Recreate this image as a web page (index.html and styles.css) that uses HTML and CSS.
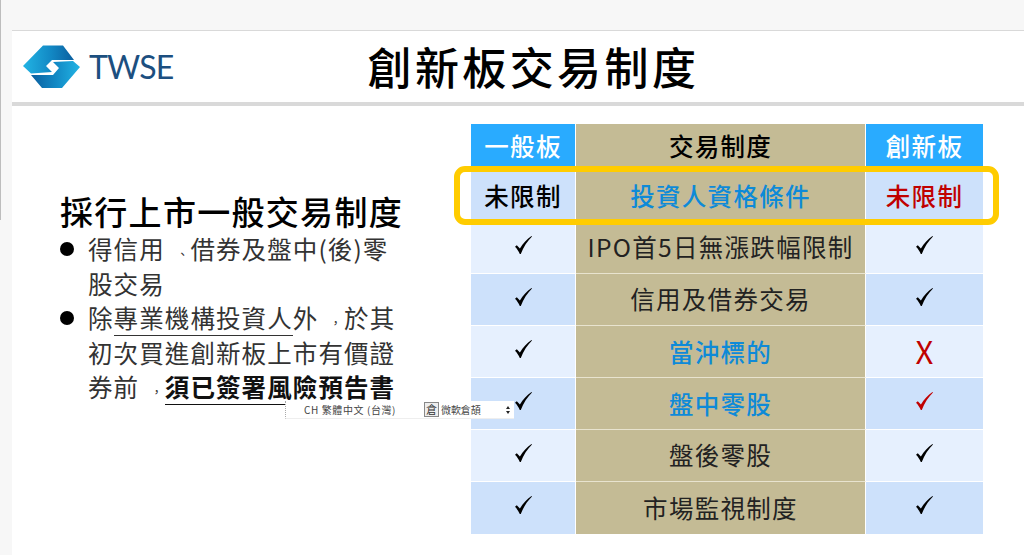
FILE: index.html
```html
<!DOCTYPE html>
<html lang="zh-Hant">
<head>
<meta charset="utf-8">
<title>創新板交易制度</title>
<link rel="stylesheet" href="styles.css">
</head>
<body>
<svg width="0" height="0" class="defs">
  <defs>
    <symbol id="check" viewBox="0 0 17 18"><path d="M0 10.800 L1.800 9.200 L4.900 12.600 C8 7.400 12 3 16.500 0 L17 .5 C12.400 5 8.400 11 5.800 18 L4.800 18 C3.700 15.400 2 12.800 0 10.800Z"/></symbol>
  </defs>
</svg>
<div class="edge"></div>
<main class="slide">
  <header class="head">
    <div class="logo">
      <svg class="mark" width="58" height="44" viewBox="23 45 58 44">
        <defs>
          <linearGradient id="g1" x1="0" x2="1" y1="0" y2="0"><stop offset="0" stop-color="#22b4e4"/><stop offset=".55" stop-color="#1288c4"/><stop offset="1" stop-color="#0b5f9f"/></linearGradient>
          <linearGradient id="g2" x1="0" x2="1" y1="0" y2="0"><stop offset="0" stop-color="#0b5f9f"/><stop offset=".5" stop-color="#1288c4"/><stop offset="1" stop-color="#22b4e4"/></linearGradient>
        </defs>
        <polygon fill="url(#g1)" points="23,66 43,45.500 63,45.500 74,60 52,60 46,66 52,72 31,73.500"/>
        <polygon fill="url(#g2)" points="80,67 62,88 42,88 31,75 53,75 59,68 53,62 73,61"/>
      </svg>
      <span class="brand">TWSE</span>
    </div>
    <h1 class="title">創新板交易制度</h1>
  </header>
  <div class="rule"></div>
  <div class="content">
    <section class="notes">
      <h2 class="lead">採行上市一般交易制度</h2>
      <ul class="points">
        <li class="point">得信用<span class="punct">、</span>借券及盤中(後)零股交易</li>
        <li class="point">除<u class="mark-u">專業機構投資人</u>外<span class="punct">，</span>於其初次買進創新板上市有價證券前<span class="punct">，</span><u class="strong-u">須已簽署風險預告書</u></li>
      </ul>
    </section>
    <section class="table-wrap">
      <div class="grid">
        <div class="cell hd">一般板</div><div class="cell mid hd-mid">交易制度</div><div class="cell hd">創新板</div>
        <div class="cell c1 med">未限制</div><div class="cell mid blue med">投資人資格條件</div><div class="cell c1 red med">未限制</div>
        <div class="cell c2"><svg class="tick"><use href="#check"/></svg></div><div class="cell mid">IPO首5日無漲跌幅限制</div><div class="cell c2"><svg class="tick"><use href="#check"/></svg></div>
        <div class="cell c1"><svg class="tick"><use href="#check"/></svg></div><div class="cell mid">信用及借券交易</div><div class="cell c1"><svg class="tick"><use href="#check"/></svg></div>
        <div class="cell c2"><svg class="tick"><use href="#check"/></svg></div><div class="cell mid blue med">當沖標的</div><div class="cell c2 red cross">X</div>
        <div class="cell c1"><svg class="tick"><use href="#check"/></svg></div><div class="cell mid blue med">盤中零股</div><div class="cell c1"><svg class="tick tick-red"><use href="#check"/></svg></div>
        <div class="cell c2"><svg class="tick"><use href="#check"/></svg></div><div class="cell mid">盤後零股</div><div class="cell c2"><svg class="tick"><use href="#check"/></svg></div>
        <div class="cell c1"><svg class="tick"><use href="#check"/></svg></div><div class="cell mid">市場監視制度</div><div class="cell c1"><svg class="tick"><use href="#check"/></svg></div>
      </div>
      <div class="highlight"></div>
    </section>
  </div>
</main>
<div class="ime">
  <span class="ime-lang">CH 繁體中文 (台灣)</span>
  <span class="ime-key">倉</span>
  <span class="ime-name">微軟倉頡</span>
  <span class="ime-spin"><i class="up"></i><i class="down"></i></span>
</div>
</body>
</html>
```
FILE: styles.css
```css
* { box-sizing: border-box; }
html, body { margin: 0; height: 100%; }
body {
  background: #f7f7f7;
  font-family: "Noto Sans CJK TC", "Noto Sans", sans-serif;
  overflow: hidden;
  padding: 30px 0 0 12px;
  color: #000;
}
.defs { position: absolute; }
.edge { position: absolute; left: 0; top: 0; width: 1px; height: 220px; background: #bdbdbd; }
.slide { background: #fff; border-top: 1px solid #d9d9d9; height: 525px; }
.head { height: 71px; display: flex; align-items: center; }
.logo { display: flex; align-items: center; margin-left: 11px; gap: 8px; margin-top: 1px; }
.mark { display: block; }
.brand { font-family: "Lato", sans-serif; font-size: 32px; color: #1c4f80; letter-spacing: -.8px; line-height: 1; }
.title { margin: -2px 0 0 194px; font-size: 44px; font-weight: 500; letter-spacing: 3.400px; line-height: 1; white-space: nowrap; }
.rule { height: 4px; background: #d9d9d9; }
.content { display: flex; padding: 18px 0 0 48px; }
.notes { width: 343px; padding-top: 67px; }
.lead { margin: 0; font-size: 33px; font-weight: 500; letter-spacing: 1.3px; line-height: 40px; white-space: nowrap; }
.points { list-style: none; margin: 1px 0 0; padding: 0; color: #333; font-size: 24.500px; line-height: 34.500px; letter-spacing: 1.100px; }
.point { position: relative; padding-left: 28px; }
.point::before { content: ""; position: absolute; left: 0; top: 10px; width: 14px; height: 14px; border-radius: 50%; background: #000; }
.punct { display: inline-block; transform: translate(5px, 5px) scale(.5); }
.mark-u { text-decoration: none; border-bottom: 1.500px solid #333; }
.strong-u { text-decoration: none; border-bottom: 1.500px solid #111; font-weight: 700; color: #111; }
.table-wrap { margin-left: 68px; position: relative; width: 512px; }
.grid { display: grid; grid-template-columns: 105px 290px 117px; grid-template-rows: 46px repeat(7, 52px); height: 408px; width: 512px; }
.cell { display: flex; align-items: center; justify-content: center; font-size: 24.500px; letter-spacing: 1.300px; border-bottom: 1px solid #fff; border-right: 1px solid #fff; white-space: nowrap; color: #222; padding-bottom: 2px; }
.cell:nth-child(3n) { border-right: 0; }
.cell:nth-last-child(-n+3) { border-bottom: 0; }
.hd { background: #29abff; color: #fff; font-weight: 500; }
.mid { background: #c4bb95; border-bottom-color: #e8e3cf; }
.hd-mid { font-weight: 500; color: #000; }
.c1 { background: #cde1fb; color: #000; }
.c2 { background: #e6f0fe; }
.blue { color: #0e8ad8; }
.red { color: #c00000; }
.med { font-weight: 500; padding-bottom: 0; }
.cross { font-size: 31px; font-weight: 400; letter-spacing: 0; color: #c00000; }
.tick { width: 17px; height: 18px; fill: #000; margin-bottom: 4px; }
.tick-red { fill: #c00000; }
.highlight { position: absolute; left: -17px; top: 42px; width: 545px; height: 59px; border: 6px solid #ffcc00; border-radius: 11px; }
.ime { position: absolute; left: 285px; top: 401px; width: 229px; height: 18px; background: #fff; border-left: 1px dotted #aaa; border-bottom: 1px solid #eee; font-size: 10px; line-height: 16px; color: #444; display: flex; align-items: center; }
.ime-lang { margin-left: 18px; width: 120px; white-space: nowrap; letter-spacing: .6px; }
.ime-key { width: 15px; height: 15px; border: 1px solid #888; background: #eee; font-size: 11px; line-height: 13px; text-align: center; color: #333; }
.ime-name { margin-left: 2px; font-size: 10px; letter-spacing: -.1px; white-space: nowrap; width: 39px; }
.ime-spin { margin-left: 26px; display: flex; flex-direction: column; gap: 2px; }
.up { width: 0; height: 0; border: 2.500px solid transparent; border-top: 0; border-bottom: 3px solid #222; }
.down { width: 0; height: 0; border: 2.500px solid transparent; border-bottom: 0; border-top: 3px solid #222; }
```
